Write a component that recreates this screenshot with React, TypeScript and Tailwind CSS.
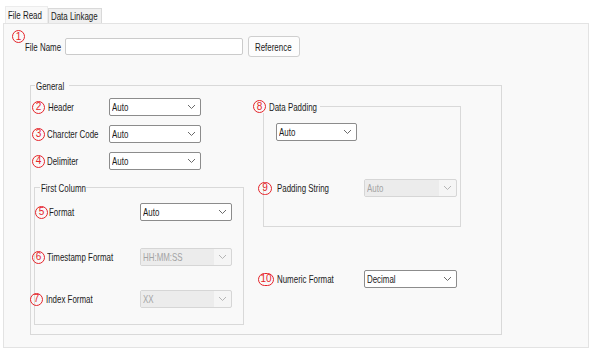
import React from "react";

const Num: React.FC<{ n: number; className?: string }> = ({ n, className = "" }) => (
  <span
    className={`flex shrink-0 items-center justify-center h-[13px] ${
      n >= 10 ? "w-[16px]" : "w-[13px]"
    } rounded-full border border-[#e5242a] text-[#e5242a] text-[10px] leading-none ${className}`}
  >
    {n}
  </span>
);

const Label: React.FC<{ children: React.ReactNode; className?: string }> = ({
  children,
  className = "",
}) => (
  <span
    className={`inline-block origin-left scale-x-[0.72] whitespace-nowrap text-[11px] leading-[12px] ${className}`}
  >
    {children}
  </span>
);

const Chevron: React.FC<{ muted?: boolean }> = ({ muted }) => (
  <svg width="9" height="6" viewBox="0 0 9 6" className="shrink-0">
    <polyline
      points="1,1 4.5,4.5 8,1"
      fill="none"
      stroke={muted ? "#b5b5b5" : "#6a6a6a"}
      strokeWidth="1"
    />
  </svg>
);

const Select: React.FC<{ value: string; disabled?: boolean; className?: string }> = ({
  value,
  disabled,
  className = "",
}) =>
  disabled ? (
    <div
      className={`flex items-center h-[18px] rounded-[2px] border border-[#d6d6d6] bg-[#f5f5f5] ${className}`}
    >
      <div className="flex-1 h-full flex items-center pl-[2px] bg-[#ececec] text-[#a3a3a3]">
        <Label>{value}</Label>
      </div>
      <div className="w-[17px] flex justify-center">
        <Chevron muted />
      </div>
    </div>
  ) : (
    <div
      className={`flex items-center h-[18px] rounded-[2px] border border-[#8c8c8c] bg-white ${className}`}
    >
      <div className="flex-1 flex items-center pl-[2px] text-[#1b1b1b]">
        <Label>{value}</Label>
      </div>
      <div className="w-[17px] flex justify-center">
        <Chevron />
      </div>
    </div>
  );

export default function App() {
  return (
    <div className="w-[594px] h-[356px] bg-white overflow-hidden font-['Liberation_Sans',Arial,sans-serif] text-[#1b1b1b]">
      {/* tabs */}
      <div className="flex items-end h-[23px] pl-[5px]">
        <div className="h-[17px] w-[43px] flex items-center pl-[2px] bg-[#f9f9f9] border border-b-0 border-[#ececec]">
          <Label>File Read</Label>
        </div>
        <div className="h-[15px] w-[54px] flex items-center pl-[2px] bg-[#f0f0f0] border border-b-0 border-[#d9d9d9]">
          <Label>Data Linkage</Label>
        </div>
      </div>

      {/* panel */}
      <div className="ml-[3px] w-[586px] h-[325px] border border-[#e3e3e3] bg-[#f9f9f9]">
        <div className="mt-[12px] ml-[8px] flex items-center h-[21px]">
          <Num n={1} className="relative -top-[10px]" />
          <div className="w-[40px] flex items-center pt-[1px]">
            <Label>File Name</Label>
          </div>
          <div className="w-[178px] h-[17px] bg-white border border-[#cbcbcb] rounded-[2px]" />
          <div className="ml-[5px] w-[52px] h-[21px] flex items-center pl-[6px] bg-[#fdfdfd] border border-[#cfcfcf] rounded-[3px]">
            <Label>Reference</Label>
          </div>
        </div>

        <fieldset className="mt-[22px] ml-[26px] w-[472px] h-[256px] border border-[#d9d9d9]">
          <legend className="ml-[4px] px-[1px] w-[34px] h-[12px] leading-[12px] overflow-visible">
            <Label>General</Label>
          </legend>
          <div className="flex">
            {/* left column */}
            <div className="w-[222px]">
              <div className="mt-[7px] flex items-center h-[18px]">
                <div className="w-[78px] flex items-center">
                  <Num n={2} className="ml-[1px]" />
                  <Label className="ml-[3px]">Header</Label>
                </div>
                <Select value="Auto" className="w-[92px]" />
              </div>
              <div className="mt-[9px] flex items-center h-[18px]">
                <div className="w-[78px] flex items-center">
                  <Num n={3} className="ml-[1px]" />
                  <Label className="ml-[2px]">Charcter Code</Label>
                </div>
                <Select value="Auto" className="w-[92px]" />
              </div>
              <div className="mt-[9px] flex items-center h-[18px]">
                <div className="w-[78px] flex items-center">
                  <Num n={4} className="ml-[1px]" />
                  <Label className="ml-[2px]">Delimiter</Label>
                </div>
                <Select value="Auto" className="w-[92px]" />
              </div>

              <fieldset className="mt-[11px] ml-[3px] w-[210px] h-[144px] border border-[#d9d9d9]">
                <legend className="ml-[5px] px-[1px] w-[46px] h-[12px] leading-[12px] overflow-visible">
                  <Label>First Column</Label>
                </legend>
                <div className="mt-[10px] flex items-center h-[18px]">
                  <div className="w-[105px] flex items-center">
                    <Num n={5} />
                    <Label className="ml-[1px]">Format</Label>
                  </div>
                  <Select value="Auto" className="w-[92px]" />
                </div>
                <div className="mt-[27px] flex items-center h-[18px]">
                  <div className="w-[105px] flex items-center">
                    <Num n={6} className="-ml-[3px]" />
                    <Label className="ml-[2px]">Timestamp Format</Label>
                  </div>
                  <Select value="HH:MM:SS" disabled className="w-[92px]" />
                </div>
                <div className="mt-[24px] flex items-center h-[18px]">
                  <div className="w-[105px] flex items-center">
                    <Num n={7} className="-ml-[5px]" />
                    <Label className="ml-[3px]">Index Format</Label>
                  </div>
                  <Select value="XX" disabled className="w-[92px]" />
                </div>
              </fieldset>
            </div>

            {/* right column */}
            <div className="flex-1">
              <fieldset className="mt-[9px] ml-[10px] w-[198px] h-[127px] border border-[#d9d9d9]">
                <legend className="-ml-[11px] w-[67px] h-[13px] flex items-center overflow-visible">
                  <Num n={8} />
                  <Label className="ml-[3px]">Data Padding</Label>
                </legend>
                <Select value="Auto" className="mt-[10px] ml-[12px] w-[81px]" />
                <div className="mt-[38px] flex items-center h-[18px]">
                  <div className="w-[100px] flex items-center">
                    <Num n={9} className="-ml-[6px] w-[14px]" />
                    <Label className="ml-[5px]">Padding String</Label>
                  </div>
                  <Select value="Auto" disabled className="w-[93px]" />
                </div>
              </fieldset>

              <div className="mt-[43px] flex items-center h-[18px]">
                <div className="w-[111px] flex items-center">
                  <Num n={10} className="ml-[5px]" />
                  <Label className="ml-[3px]">Numeric Format</Label>
                </div>
                <Select value="Decimal" className="w-[93px]" />
              </div>
            </div>
          </div>
        </fieldset>
      </div>
    </div>
  );
}
